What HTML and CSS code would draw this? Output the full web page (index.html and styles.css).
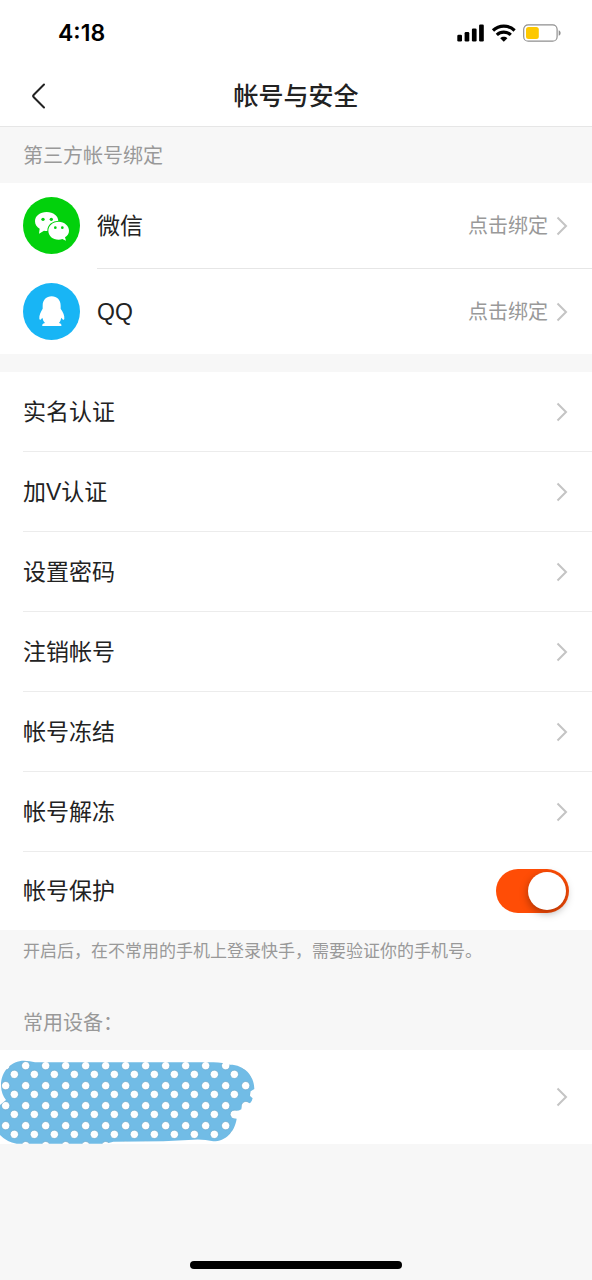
FILE: index.html
```html
<!DOCTYPE html>
<html lang="zh-CN">
<head>
<meta charset="utf-8">
<meta name="viewport" content="width=device-width, initial-scale=1">
<title>帐号与安全</title>
<link rel="stylesheet" href="styles.css">
</head>
<body>
<svg class="defs" aria-hidden="true">
  <symbol id="chevron" viewBox="0 0 12 20"><path d="M1.5 1.5 10 10 1.5 18.5" fill="none" stroke="currentColor" stroke-width="2"/></symbol>
</svg>
<div class="screen">
  <div class="status">
    <time class="clock">4:18</time>
    <svg class="status-icons" viewBox="0 0 104 18" aria-hidden="true">
      <rect x="0.3" y="10.8" width="4.7" height="6.7" rx="1.3"/>
      <rect x="7.6" y="8" width="4.7" height="9.5" rx="1.3"/>
      <rect x="14.9" y="4.4" width="4.7" height="13.1" rx="1.3"/>
      <rect x="22.1" y="0.4" width="4.7" height="17.1" rx="1.3"/>
      <g fill="none" stroke="#000" stroke-width="3.2">
        <path d="M36 6.5C42.2 0.6 51.4 0.6 57.6 6.5"/>
        <path d="M39.8 10.8C43.8 7.1 49.8 7.1 53.8 10.8"/>
      </g>
      <path d="M43.2 14.200C45.300 12.300 48.300 12.300 50.400 14.200L46.800 17.700Z"/>
      <rect x="66.700" y="0.800" width="33.400" height="16.400" rx="4.500" fill="none" stroke="#8f8f8f" stroke-width="1.200"/>
      <rect x="69" y="2.900" width="12.800" height="12.200" rx="2.500" fill="#fdc800"/>
      <path d="M101.700 6.200C104.300 7.200 104.300 10.800 101.700 11.800Z" fill="#8f8f8f"/>
    </svg>
  </div>
  <header class="header">
    <button class="back" type="button" aria-label="返回">
      <svg viewBox="0 0 16 26" aria-hidden="true"><path d="M14 1.500 3.800 11.700Q2.500 13 3.800 14.300L14 24.500" fill="none" stroke="currentColor" stroke-width="2" stroke-linecap="round"/></svg>
    </button>
    <h1 class="title">帐号与安全</h1>
  </header>
  <main>
    <h2 class="group-label">第三方帐号绑定</h2>
    <ul class="list list-accounts">
      <li class="item">
        <a class="row" href="#wechat">
          <svg class="logo" viewBox="0 0 171 171" aria-hidden="true">
            <circle cx="85.500" cy="85.500" r="85.500" fill="#02d10c"/>
            <path d="M71 45C51 45 36 57 36 73C36 82 41 90 50 95L48 110 63 101Q67 102 71 102C91 102 106 89 106 73C106 57 91 45 71 45Z" fill="#fff"/>
            <path d="M107 74C89 74 76 86 76 101C76 116 89 128 107 128Q113 128 118 126L129 131 126 121C134 116 138 109 138 101C138 86 124 74 107 74Z" fill="#fff" stroke="#02d10c" stroke-width="6" paint-order="stroke"/>
            <g fill="#02d10c"><circle cx="60" cy="67" r="5"/><circle cx="85" cy="67" r="5"/><circle cx="97" cy="92" r="4"/><circle cx="118" cy="92" r="4"/></g>
          </svg>
          <span class="name">微信</span>
          <span class="action">点击绑定</span>
          <svg class="chevron" aria-hidden="true"><use href="#chevron"/></svg>
        </a>
      </li>
      <li class="item">
        <a class="row" href="#qq">
          <svg class="logo" viewBox="0 0 171 171" aria-hidden="true">
            <circle cx="85.500" cy="85.500" r="85.500" fill="#18b5f5"/>
            <path d="M86 40C70 40 59 51 59 68L59 77C53 86 48 98 49 107C50 113 54 110 58 104Q60 114 66 120C58 122 57 125 58 129L115 129C116 125 115 122 108 120Q113 114 115 104C119 110 123 113 124 107C125 98 120 86 113 77L113 68C113 51 102 40 86 40Z" fill="#fff"/>
          </svg>
          <span class="name">QQ</span>
          <span class="action">点击绑定</span>
          <svg class="chevron" aria-hidden="true"><use href="#chevron"/></svg>
        </a>
      </li>
    </ul>
    <ul class="list list-settings">
      <li class="item"><a class="row" href="#realname"><span class="name">实名认证</span><svg class="chevron" aria-hidden="true"><use href="#chevron"/></svg></a></li>
      <li class="item"><a class="row" href="#verify"><span class="name">加V认证</span><svg class="chevron" aria-hidden="true"><use href="#chevron"/></svg></a></li>
      <li class="item"><a class="row" href="#password"><span class="name">设置密码</span><svg class="chevron" aria-hidden="true"><use href="#chevron"/></svg></a></li>
      <li class="item"><a class="row" href="#close"><span class="name">注销帐号</span><svg class="chevron" aria-hidden="true"><use href="#chevron"/></svg></a></li>
      <li class="item"><a class="row" href="#freeze"><span class="name">帐号冻结</span><svg class="chevron" aria-hidden="true"><use href="#chevron"/></svg></a></li>
      <li class="item"><a class="row" href="#unfreeze"><span class="name">帐号解冻</span><svg class="chevron" aria-hidden="true"><use href="#chevron"/></svg></a></li>
      <li class="item"><label class="row" for="protect"><span class="name">帐号保护</span><input class="switch" id="protect" type="checkbox" role="switch" checked></label></li>
    </ul>
    <p class="note">开启后，在不常用的手机上登录快手，需要验证你的手机号。</p>
    <h2 class="group-label">常用设备：</h2>
    <a class="device" href="#device" aria-label="常用设备">
      <svg class="cover" viewBox="0 60 768 252" aria-hidden="true">
        <defs>
          <pattern id="dots" width="60" height="60" patternUnits="userSpaceOnUse">
            <rect width="60" height="60" fill="#71bce6"/>
            <g fill="#fff" stroke="#64a3c6" stroke-width="2"><circle cx="17" cy="17" r="12.500"/><circle cx="43" cy="43" r="12.500"/></g>
          </pattern>
        </defs>
        <path d="M3 137C3 92 35 62 72 62Q90 62 105 67L640 67Q670 68 690 74C732 74 763 106 763 147L752 154 750 168 758 174Q756 185 750 190L738 186 726 194 724 208Q714 214 706 212L693 218 698 234 710 236C704 276 677 304 640 304Q610 297 580 299L490 304 340 305 317 311 50 311Q20 306 0 285L0 195 18 180Q4 162 3 137Z" fill="url(#dots)"/>
      </svg>
      <svg class="chevron" aria-hidden="true"><use href="#chevron"/></svg>
    </a>
  </main>
  <div class="home-indicator"></div>
</div>
</body>
</html>
```

FILE: styles.css
```css
* {
  box-sizing: border-box;
}

body {
  margin: 0;
  background: #f7f7f7;
  color: #222;
  font-family: "Liberation Sans", "Noto Sans CJK SC", sans-serif;
}

.defs {
  display: none;
}

.screen {
  display: flex;
  flex-direction: column;
  min-height: 100vh;
}

.status {
  display: flex;
  align-items: center;
  justify-content: space-between;
  height: 65px;
  padding: 0 31px 0 58px;
  background: #fff;
  color: #000;
}

.clock {
  font: 600 23px/28px Inter, sans-serif;
}

.status-icons {
  width: 104px;
  height: 18px;
}

.header {
  display: grid;
  grid-template-columns: 48px 1fr 48px;
  align-items: center;
  height: 62px;
  padding: 0 16px;
  border-bottom: 1px solid #e6e6e6;
  background: #fff;
}

.back {
  display: flex;
  padding: 8px 14px;
  border: 0;
  background: none;
  color: #222;
}

.back svg {
  flex: none;
  width: 16px;
  height: 26px;
}

.title {
  margin: 0;
  font-size: 25px;
  font-weight: 500;
  line-height: 32px;
  text-align: center;
}

.group-label {
  margin: 0;
  padding: 2px 23px 0;
  color: #999;
  font-size: 20px;
  font-weight: 400;
  line-height: 54px;
}

.list {
  margin: 0;
  padding: 0;
  background: #fff;
  list-style: none;
}

.item {
  padding-left: 23px;
}

.row {
  display: flex;
  align-items: center;
  padding-right: 24px;
  color: inherit;
  text-decoration: none;
}

.list-accounts .row {
  height: 85px;
}

.list-accounts .item + .item::before {
  display: block;
  height: 1px;
  margin-left: 74px;
  background: #e6e6e6;
  content: "";
}

.list-settings {
  margin-top: 18px;
}

.list-settings .row {
  height: 80px;
  border-bottom: 1px solid #ececec;
}

.list-settings .item:last-child .row {
  height: 78px;
  padding-right: 23px;
  border-bottom: 0;
}

.logo {
  width: 57px;
  height: 57px;
  margin-right: 17px;
}

.name {
  flex: 1;
  font-size: 23px;
  line-height: 32px;
}

.action {
  margin-right: 8px;
  color: #999;
  font-size: 20px;
  line-height: 28px;
}

.chevron {
  flex: none;
  width: 12px;
  height: 20px;
  color: #c4c4c4;
}

.switch {
  width: 73px;
  height: 44px;
  margin: 0;
  padding: 3px;
  border-radius: 22px;
  background: #ccc;
  appearance: none;
}

.switch::before {
  display: block;
  width: 38px;
  height: 38px;
  border-radius: 50%;
  background: #fff;
  box-shadow: 0 3px 8px rgba(0, 0, 0, 0.35);
  content: "";
}

.switch:checked {
  background: #ff4d06;
}

.switch:checked::before {
  margin-left: auto;
}

.note {
  margin: 0;
  padding: 8px 23px 28px;
  color: #999;
  font-size: 17px;
  line-height: 28px;
}

.device {
  display: flex;
  align-items: center;
  justify-content: space-between;
  height: 94px;
  padding-right: 24px;
  background: #fff;
}

.cover {
  align-self: flex-end;
  width: 256px;
  height: 84px;
}

.home-indicator {
  width: 212px;
  height: 8px;
  margin: auto auto 11px;
  border-radius: 4px;
  background: #000;
}
```
